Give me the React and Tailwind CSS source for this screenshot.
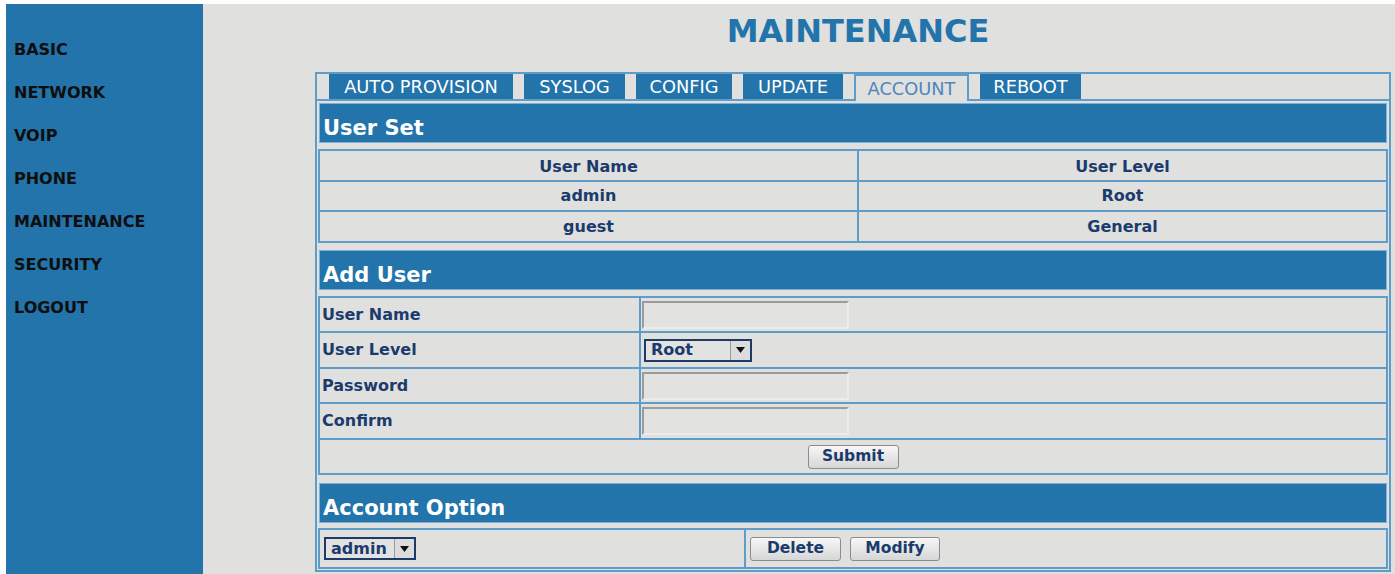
import { useState } from 'react'

const navItems = ['BASIC', 'NETWORK', 'VOIP', 'PHONE', 'MAINTENANCE', 'SECURITY', 'LOGOUT']
const tabs = [
  { id: 'auto', label: 'AUTO PROVISION', w: 'w-[184px]' },
  { id: 'syslog', label: 'SYSLOG', w: 'w-[101px]' },
  { id: 'config', label: 'CONFIG', w: 'w-[96px]' },
  { id: 'update', label: 'UPDATE', w: 'w-[100px]' },
  { id: 'account', label: 'ACCOUNT', w: 'w-[115px]' },
  { id: 'reboot', label: 'REBOOT', w: 'w-[101px]' },
]
const users = [
  { name: 'admin', level: 'Root', h: 'h-[30px]' },
  { name: 'guest', level: 'General', h: 'h-[31px]' },
]

function SectionHead({ children }) {
  return (
    <div className="mx-[2px] h-[40px] border border-[#7fb0d4] bg-[#2274aa] flex items-center pl-[3px] pt-[11px] text-[21px] font-bold text-white">
      {children}
    </div>
  )
}

function TextBox({ type = 'text' }) {
  return (
    <input
      type={type}
      className="w-[207px] h-[28px] bg-[#e2e2e1] border-2 border-t-[#9b9b9b] border-l-[#9b9b9b] border-r-[#ececec] border-b-[#ececec] outline-none px-1 text-[14px]"
    />
  )
}

function DropBox({ value, width }) {
  return (
    <div className={`${width} h-[23px] border-2 border-[#1e3a66] bg-[#e2e2e1] flex items-stretch`}>
      <span className="flex-1 flex items-center pl-[5px] text-[16px] font-bold text-[#1a3b6c]">{value}</span>
      <span className="w-[20px] border-l border-[#9b9b9b] bg-[#dcdcdc] flex items-center justify-center">
        <svg width="9" height="6" viewBox="0 0 9 6"><path d="M0 0h9L4.5 6z" fill="#111" /></svg>
      </span>
    </div>
  )
}

function Btn({ children, w }) {
  return (
    <button className={`${w} h-[24px] rounded-[3px] border border-[#8c8c8c] bg-gradient-to-b from-[#f7f7f7] to-[#d6d6d6] text-[15.5px] font-bold text-[#1a3b6c] leading-none`}>
      {children}
    </button>
  )
}

export default function App() {
  const [active, setActive] = useState('account')

  return (
    <div className="min-h-screen bg-white pt-[4px] pl-[6px] flex" style={{ fontFamily: '"DejaVu Sans", Verdana, sans-serif' }}>
      {/* Left menu */}
      <div className="w-[197px] h-[570px] bg-[#2274aa] flex flex-col pt-[24px] pl-[8px]">
        {navItems.map(item => (
          <div key={item} className="h-[43px] flex items-center text-[16px] font-bold text-[#0e0e0e]">{item}</div>
        ))}
      </div>

      {/* Content */}
      <div className="flex-1 h-[570px] bg-[#e0e0df]">
        <div className="ml-[112px] w-[1076px]">
          <div className="h-[68px] flex items-center justify-center pb-[14px] pl-[10px] text-[32px] font-bold text-[#2274aa]">MAINTENANCE</div>

          <div className="border-2 border-[#5f9dc8] pb-[1px]">
            {/* Tabs */}
            <div className="h-[27px] flex items-stretch border-b-2 border-[#5f9dc8] pl-[12px] gap-[11px]">
              {tabs.map(t => (
                <button
                  key={t.id}
                  onClick={() => setActive(t.id)}
                  className={
                    active === t.id
                      ? `${t.w} pt-[1px] mb-[-2px] border-2 border-b-0 border-[#5f9dc8] bg-[#e0e0df] text-[17.8px] text-[#4f86bd] leading-none whitespace-nowrap`
                      : `${t.w} pt-[1px] bg-[#2274aa] text-[17.8px] text-white leading-none whitespace-nowrap`
                  }
                >
                  {t.label}
                </button>
              ))}
            </div>

            <div className="mt-[2px]">
              <SectionHead>User Set</SectionHead>
            </div>

            {/* User list */}
            <div className="mt-[6px] mx-[1px] border-2 border-[#5f9dc8] text-[16px] font-bold text-[#1a3b6c]">
              <div className="grid grid-cols-[539px_1fr] h-[29px]">
                <div className="flex items-center justify-center pt-[2px] border-r-2 border-[#5f9dc8]">User Name</div>
                <div className="flex items-center justify-center pt-[2px]">User Level</div>
              </div>
              {users.map(u => (
                <div key={u.name} className={`grid grid-cols-[539px_1fr] ${u.h} border-t-2 border-[#5f9dc8]`}>
                  <div className="flex items-center justify-center border-r-2 border-[#5f9dc8]">{u.name}</div>
                  <div className="flex items-center justify-center">{u.level}</div>
                </div>
              ))}
            </div>

            <div className="mt-[7px]">
              <SectionHead>Add User</SectionHead>
            </div>

            {/* New user form */}
            <div className="mt-[6px] mx-[1px] border-2 border-[#5f9dc8] text-[16px] font-bold text-[#1a3b6c]">
              <div className="grid grid-cols-[321px_1fr] h-[33px]">
                <div className="flex items-center pl-[2px] pt-[1px] border-r-2 border-[#5f9dc8]">User Name</div>
                <div className="flex items-center pl-[1px]"><TextBox /></div>
              </div>
              <div className="grid grid-cols-[321px_1fr] h-[36px] border-t-2 border-[#5f9dc8]">
                <div className="flex items-center pl-[2px] border-r-2 border-[#5f9dc8]">User Level</div>
                <div className="flex items-center pl-[3px]"><DropBox value="Root" width="w-[108px]" /></div>
              </div>
              <div className="grid grid-cols-[321px_1fr] h-[35px] border-t-2 border-[#5f9dc8]">
                <div className="flex items-center pl-[2px] border-r-2 border-[#5f9dc8]">Password</div>
                <div className="flex items-center pl-[1px]"><TextBox type="password" /></div>
              </div>
              <div className="grid grid-cols-[321px_1fr] h-[36px] border-t-2 border-[#5f9dc8]">
                <div className="flex items-center pl-[2px] border-r-2 border-[#5f9dc8]">Confirm</div>
                <div className="flex items-center pl-[1px]"><TextBox type="password" /></div>
              </div>
              <div className="h-[35px] border-t-2 border-[#5f9dc8] flex items-center justify-center">
                <Btn w="w-[91px]">Submit</Btn>
              </div>
            </div>

            <div className="mt-[8px]">
              <SectionHead>Account Option</SectionHead>
            </div>

            {/* Existing account actions */}
            <div className="mt-[5px] mx-[1px] border-2 border-[#5f9dc8] grid grid-cols-[426px_1fr] h-[41px]">
              <div className="flex items-center pl-[4px] border-r-2 border-[#5f9dc8]">
                <DropBox value="admin" width="w-[92px]" />
              </div>
              <div className="flex items-center gap-[9px] pl-[4px]">
                <Btn w="w-[91px]">Delete</Btn>
                <Btn w="w-[90px]">Modify</Btn>
              </div>
            </div>
          </div>
        </div>
      </div>
    </div>
  )
}
